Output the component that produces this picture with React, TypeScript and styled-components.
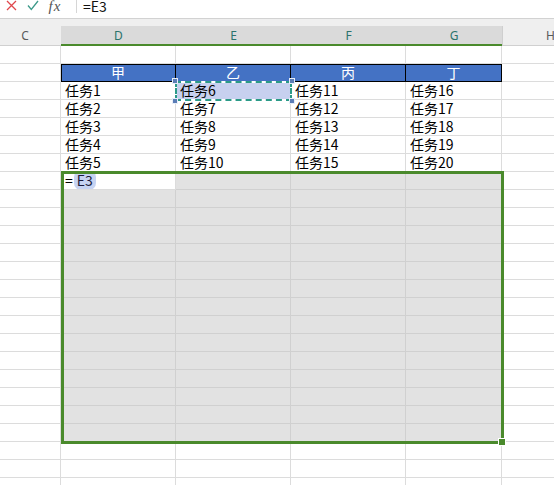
import React from "react";
import styled, { createGlobalStyle, css } from "styled-components";

const COLUMNS = "61px 115px 115px 115px 96px 96px";
const GREEN = "#4a8a2c";

const GlobalStyle = createGlobalStyle`
  html, body {
    margin: 0;
    padding: 0;
    background: #fff;
    overflow: hidden;
  }
  body {
    font-family: "Noto Sans CJK SC", "Noto Sans", sans-serif;
  }
`;

const Page = styled.div`
  width: 554px;
  height: 485px;
  overflow: hidden;
  display: flex;
  flex-direction: column;
`;

const FormulaBar = styled.div`
  height: 18px;
  box-sizing: border-box;
  display: flex;
  align-items: flex-end;
  padding-bottom: 5px;
  flex-shrink: 0;
`;

const ToolSlot = styled.div`
  width: 22px;
  display: flex;
  justify-content: center;
  align-items: flex-end;
  svg {
    display: block;
    margin-bottom: 2px;
  }
`;

const Fx = styled.span`
  font-family: "Liberation Serif", serif;
  font-style: italic;
  font-size: 15px;
  line-height: 14px;
  color: #555;
  letter-spacing: 1px;
`;

const Divider = styled.div`
  width: 1px;
  height: 14px;
  background: #d6d6d6;
  margin-left: 10px;
`;

const FormulaText = styled.span`
  margin-left: 6px;
  font-size: 14px;
  line-height: 14px;
  color: #111;
`;

const HeaderStrip = styled.div`
  height: 28px;
  box-sizing: border-box;
  flex-shrink: 0;
  background: #efefef;
  border-top: 1px solid #d2d2d2;
  display: grid;
  grid-template-columns: ${COLUMNS};
  align-items: end;
`;

const ColHead = styled.div<{ $sel?: boolean; $shift?: number; $edge?: boolean }>`
  height: 20px;
  box-sizing: border-box;
  display: flex;
  align-items: center;
  justify-content: center;
  padding-right: ${(p) => p.$shift ?? 0}px;
  font-family: "Noto Sans", sans-serif;
  font-size: 12px;
  color: #5a5a5a;
  border-bottom: 1px solid #d0d0d0;
  ${(p) => p.$edge && css`border-left: 1px solid #cfcfcf;`}
  ${(p) =>
    p.$sel &&
    css`
      background: #dadada;
      color: #2b736c;
      border-bottom: 2px solid ${GREEN};
    `}
`;

const Sheet = styled.div`
  position: relative;
  display: grid;
  grid-template-columns: ${COLUMNS};
  grid-auto-rows: 18px;
`;

type Kind = "plain" | "head" | "sel" | "copied";

const Cell = styled.div<{ $kind: Kind; $first?: boolean }>`
  box-sizing: border-box;
  height: 18px;
  border-right: 1px solid #dcdcdc;
  border-bottom: 1px solid #dcdcdc;
  padding-left: 4px;
  font-size: 14px;
  line-height: 17px;
  color: #000;
  white-space: nowrap;
  overflow: hidden;
  ${(p) =>
    p.$kind === "sel" &&
    css`
      background: #e2e2e2;
      border-color: #d0d0d0;
    `}
  ${(p) =>
    p.$kind === "copied" &&
    css`
      background: #c7d0ef;
    `}
  ${(p) =>
    p.$kind === "head" &&
    css`
      background: #4472c4;
      color: #fff;
      text-align: center;
      padding-left: 0;
      border-color: #000;
      box-shadow: inset 0 1px 0 #000 ${p.$first ? ", inset 1px 0 0 #000" : ""};
    `}
`;

const Ref = styled.span`
  background: #c6d3f2;
  border-radius: 7px;
  padding: 0 3px;
  margin-left: 1px;
  color: #1a1a3a;
`;

const SelectionFrame = styled.div`
  position: absolute;
  left: 61px;
  top: 125px;
  width: 443px;
  height: 273px;
  box-sizing: border-box;
  border: 3px solid ${GREEN};
  pointer-events: none;
`;

const FillHandle = styled.div`
  position: absolute;
  right: -5px;
  bottom: -5px;
  width: 6px;
  height: 6px;
  background: ${GREEN};
  border: 1px solid #fff;
`;

const Marquee = styled.div`
  position: absolute;
  left: 175px;
  top: 35px;
  width: 117px;
  height: 20px;
  box-sizing: border-box;
  border: 2px solid #fff;
  pointer-events: none;
  &::after {
    content: "";
    position: absolute;
    inset: -2px;
    border: 2px dashed #2b9a88;
  }
`;

const Corner = styled.div<{ $x: "l" | "r"; $y: "t" | "b" }>`
  position: absolute;
  width: 4px;
  height: 4px;
  background: #5b7db6;
  border: 1px solid #e8eef8;
  z-index: 1;
  ${(p) => (p.$x === "l" ? "left: -5px;" : "right: -5px;")}
  ${(p) => (p.$y === "t" ? "top: -5px;" : "bottom: -5px;")}
`;

const CancelIcon = () => (
  <svg width="11" height="11" viewBox="0 0 11 11">
    <path d="M1 1L10 10M10 1L1 10" stroke="#e0474c" strokeWidth="1.3" fill="none" />
  </svg>
);

const ConfirmIcon = () => (
  <svg width="12" height="11" viewBox="0 0 12 11">
    <path d="M1 5.5L4.3 9.5L11 1" stroke="#3d9a8a" strokeWidth="1.3" fill="none" />
  </svg>
);

const heads = ["甲", "乙", "丙", "丁"];
const ROWS = 25;

function cellFor(r: number, c: number) {
  // c: 0 = C, 1..4 = D..G, 5 = H
  const inTable = c >= 1 && c <= 4;
  if (r === 1 && inTable) {
    return (
      <Cell key={c} $kind="head" $first={c === 1}>
        {heads[c - 1]}
      </Cell>
    );
  }
  if (r >= 2 && r <= 6 && inTable) {
    const n = (c - 1) * 5 + (r - 1);
    const kind: Kind = r === 2 && c === 2 ? "copied" : "plain";
    return (
      <Cell key={c} $kind={kind}>
        任务{n}
      </Cell>
    );
  }
  if (r === 7 && c === 1) {
    return (
      <Cell key={c} $kind="plain">
        =<Ref>E3</Ref>
      </Cell>
    );
  }
  if (r >= 7 && r <= 21 && inTable) {
    return <Cell key={c} $kind="sel" />;
  }
  return <Cell key={c} $kind="plain" />;
}

export default function App() {
  return (
    <Page>
      <GlobalStyle />
      <FormulaBar>
        <ToolSlot>
          <CancelIcon />
        </ToolSlot>
        <ToolSlot>
          <ConfirmIcon />
        </ToolSlot>
        <ToolSlot>
          <Fx>fx</Fx>
        </ToolSlot>
        <Divider />
        <FormulaText>=E3</FormulaText>
      </FormulaBar>
      <HeaderStrip>
        <ColHead $shift={11}>C</ColHead>
        <ColHead $sel>D</ColHead>
        <ColHead $sel>E</ColHead>
        <ColHead $sel>F</ColHead>
        <ColHead $sel>G</ColHead>
        <ColHead $edge>H</ColHead>
      </HeaderStrip>
      <Sheet>
        {Array.from({ length: ROWS }, (_, r) => (
          <React.Fragment key={r}>
            {Array.from({ length: 6 }, (_, c) => cellFor(r, c))}
          </React.Fragment>
        ))}
        <Marquee>
          <Corner $x="l" $y="t" />
          <Corner $x="r" $y="t" />
          <Corner $x="l" $y="b" />
          <Corner $x="r" $y="b" />
        </Marquee>
        <SelectionFrame>
          <FillHandle />
        </SelectionFrame>
      </Sheet>
    </Page>
  );
}
